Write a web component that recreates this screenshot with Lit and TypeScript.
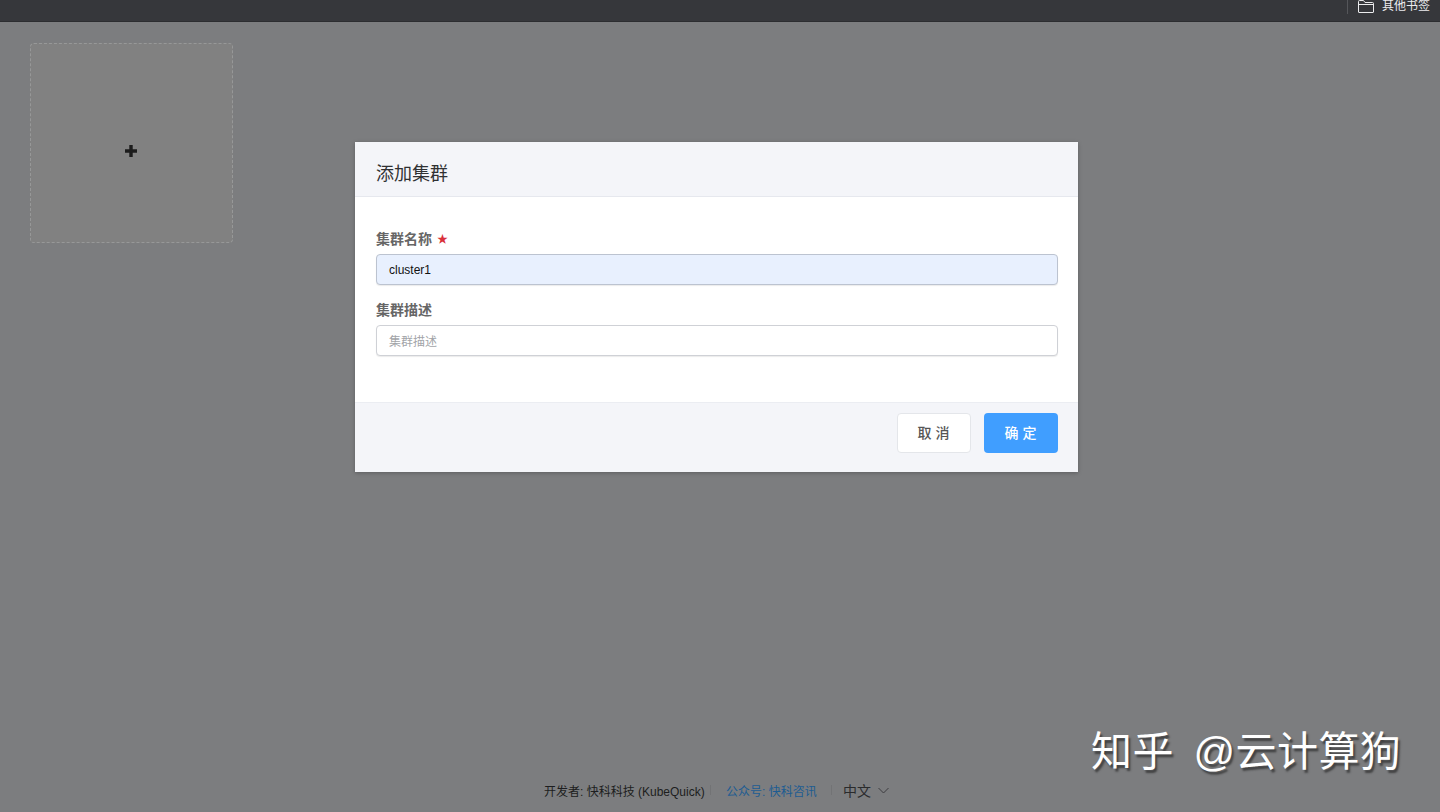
import { LitElement, html, css } from "lit";
import { customElement } from "lit/decorators.js";

@customElement("app-root")
export class AppRoot extends LitElement {
  static styles = css`
    :host {
      display: flex;
      flex-direction: column;
      position: relative;
      height: 812px;
      overflow: hidden;
      background: #7c7d7f;
      font-family: "Liberation Sans", "Noto Sans CJK SC", sans-serif;
    }
    .topbar {
      height: 22px;
      flex: none;
      box-sizing: border-box;
      background: #36373b;
      border-bottom: 1px solid #2c2d30;
      display: flex;
      justify-content: flex-end;
      align-items: center;
      padding-right: 10px;
      color: #ececee;
      font-size: 12px;
      overflow: hidden;
    }
    .sep {
      width: 1px;
      height: 14px;
      margin: -8px 10px 0 0;
      background: #55565a;
    }
    .bookmark {
      display: flex;
      align-items: center;
      gap: 8px;
      margin-top: -9px;
      line-height: 14px;
    }
    .bookmark svg { display: block; }
    .main {
      flex: 1;
      padding: 21px 30px;
    }
    .add-card {
      width: 203px;
      height: 200px;
      box-sizing: border-box;
      border: 1px dashed #979898;
      border-radius: 4px;
      background: #818181;
      display: flex;
      align-items: center;
      justify-content: center;
    }
    .add-card svg { display: block; margin-top: 15px; margin-right: 1px; }
    .footer {
      flex: none;
      height: 42px;
      box-sizing: border-box;
      padding: 0 0 2px 544px;
      display: flex;
      align-items: center;
      font-size: 12px;
      color: #1d1e20;
      white-space: nowrap;
    }
    .dev { width: 166px; }
    .bar {
      width: 1px;
      height: 10px;
      background: #727375;
    }
    .link { color: #1d5c92; margin-left: 15px; width: 105px; }
    .lang {
      margin-left: 11px;
      font-size: 14px;
      color: #2a2b2d;
      display: flex;
      align-items: center;
      gap: 7px;
    }
    .lang svg { display: block; }
    .modal {
      position: absolute;
      left: 355px;
      top: 142px;
      width: 723px;
      height: 330px;
      background: #fff;
      box-shadow: 0 1px 4px rgba(0, 0, 0, 0.25);
      display: flex;
      flex-direction: column;
    }
    .head {
      height: 55px;
      flex: none;
      box-sizing: border-box;
      background: #f4f5f9;
      border-bottom: 1px solid #e6e8ee;
      padding: 6px 21px 0;
      display: flex;
      align-items: center;
      font-size: 18px;
      color: #303133;
    }
    .body {
      flex: 1;
      padding: 32px 20px 0 21px;
    }
    .label {
      font-size: 14px;
      font-weight: 700;
      line-height: 20px;
      color: #666;
      display: flex;
      align-items: center;
      gap: 5px;
      margin-bottom: 5px;
    }
    .star { color: #d9303a; font-size: 11px; line-height: 1; }
    .field {
      height: 31px;
      box-sizing: border-box;
      border: 1px solid #cfd1d6;
      border-radius: 4px;
      padding: 0 12px;
      display: flex;
      align-items: center;
      font-size: 12px;
      margin-bottom: 15px;
      box-shadow: 0 1px 1px rgba(0, 0, 0, 0.08);
    }
    .filled { background: #e8f0fe; color: #111; border-color: #bcc3d0; }
    .empty { background: #fff; color: #a2a4a8; }
    .foot {
      height: 70px;
      flex: none;
      box-sizing: border-box;
      background: #f4f5f9;
      border-top: 1px solid #ebedf2;
      padding: 10px 20px 0 0;
      display: flex;
      justify-content: flex-end;
      gap: 13px;
    }
    .btn {
      width: 74px;
      height: 40px;
      box-sizing: border-box;
      border-radius: 4px;
      padding: 0 0 2px 3px;
      display: flex;
      align-items: center;
      justify-content: center;
      font-size: 14px;
      letter-spacing: 4px;
      font-weight: 500;
    }
    .cancel { background: #fff; border: 1px solid #e4e6ea; color: #555; }
    .ok { background: #409eff; color: #fff; }
    .mark {
      position: absolute;
      left: 1091px;
      top: 727px;
      font-size: 41px;
      line-height: 50px;
      letter-spacing: 0.4px;
      word-spacing: 8px;
      color: #fff;
      white-space: pre;
      text-shadow: 2px 3px 2px rgba(40, 40, 40, 0.7);
    }
  `;

  render() {
    return html`
      <div class="topbar">
        <div class="sep"></div>
        <div class="bookmark">
          <svg width="16" height="13" viewBox="0 0 16 13" fill="none" stroke="#ececee" stroke-width="1">
            <path d="M.5 12V1.5a1 1 0 0 1 1-1h4l1.5 2h7.5a1 1 0 0 1 1 1V12a.5.5 0 0 1-.5.5H1a.5.5 0 0 1-.5-.5z" />
            <path d="M.5 4.5h15" />
          </svg>
          <span>其他书签</span>
        </div>
      </div>
      <div class="main">
        <div class="add-card">
          <svg width="14" height="14" viewBox="0 0 14 14">
            <path d="M7 1v12M1 7h12" stroke="#1c1c1c" stroke-width="3.4" />
          </svg>
        </div>
      </div>
      <div class="footer">
        <span class="dev">开发者: 快科科技 (KubeQuick)</span>
        <span class="bar"></span>
        <span class="link">公众号: 快科咨讯</span>
        <span class="bar"></span>
        <span class="lang">
          中文
          <svg width="11" height="7" viewBox="0 0 11 7" fill="none" stroke="#3c3d40" stroke-width="1">
            <path d="M.5 1l5 5 5-5" />
          </svg>
        </span>
      </div>
      <div class="modal">
        <div class="head">添加集群</div>
        <div class="body">
          <div class="label">集群名称 <span class="star">★</span></div>
          <div class="field filled">cluster1</div>
          <div class="label">集群描述</div>
          <div class="field empty">集群描述</div>
        </div>
        <div class="foot">
          <div class="btn cancel">取消</div>
          <div class="btn ok">确定</div>
        </div>
      </div>
      <div class="mark">知乎 @云计算狗</div>
    `;
  }
}
